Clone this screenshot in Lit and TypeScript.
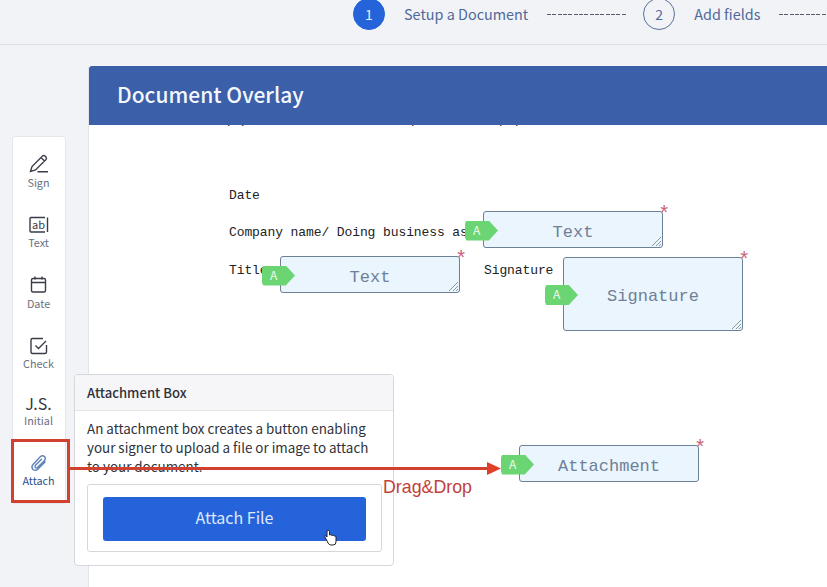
import { LitElement, html, css, svg } from "lit";
import { customElement } from "lit/decorators.js";

const ICONS: Record<string, any> = {
  sign: svg`<path d="M2.5 18.5 L4 13.5 L14.5 3 Q15.8 2 17 3 L18 4 Q19 5.2 18 6.5 L7.5 17 Z M13 4.5 L16.5 8 M9.5 18.8 H20" />`,
  date: svg`<rect x="3.500" y="4.500" width="14" height="13.500" rx="1.500"/><path d="M3.500 8.500 H17.500 M7 2.500 V5.500 M14 2.500 V5.500"/>`,
  check: svg`<path d="M18.500 10 V17 Q18.500 18.500 17 18.500 H4.500 Q3 18.500 3 17 V5 Q3 3.500 4.500 3.500 H15 M7.500 10.500 L10.500 13.500 L18 6"/>`,
  attach: svg`<path d="M17.500 9.500 L10 17 Q7.500 19.500 5 17.500 Q2.800 15 5 12.500 L12.500 4.500 Q14.500 2.800 16.500 4.500 Q18.200 6.500 16.500 8.500 L9.500 15.500 Q8.300 16.500 7.300 15.500 Q6.500 14.500 7.500 13.300 L14 6.800"/>`,
};

interface Tool { id: string; label: string; }
const TOOLS: Tool[] = [
  { id: "sign", label: "Sign" },
  { id: "text", label: "Text" },
  { id: "date", label: "Date" },
  { id: "check", label: "Check" },
  { id: "initial", label: "Initial" },
  { id: "attach", label: "Attach" },
];

interface Field { label: string; x: number; y: number; h: number; grip: boolean; }
const FIELDS: Field[] = [
  { label: "Text", x: 394, y: 86, h: 37, grip: true },
  { label: "Text", x: 191, y: 131, h: 37, grip: true },
  { label: "Signature", x: 474, y: 132, h: 74, grip: true },
  { label: "Attachment", x: 430, y: 320, h: 37, grip: false },
];

const DOC_TEXT = [
  { t: "Date", x: 140, y: 71 },
  { t: "Company name/ Doing business as", x: 140, y: 108 },
  { t: "Title", x: 140, y: 146 },
  { t: "Signature", x: 395, y: 146 },
];

@customElement("app-root")
export class AppRoot extends LitElement {
  static styles = css`
    :host {
      display: block;
      width: 827px;
      height: 587px;
      overflow: hidden;
      position: relative;
      background: #f2f3f7;
      font-family: "Noto Sans CJK SC", "Noto Sans", sans-serif;
    }
    .top {
      height: 44px;
      border-bottom: 1px solid #dcdde3;
      overflow: hidden;
      padding-left: 353px;
      display: flex;
      align-items: flex-start;
    }
    .steps {
      display: flex;
      align-items: center;
      height: 28px;
      white-space: nowrap;
      color: #4f6a9a;
      font-size: 14.400px;
    }
    .num {
      width: 32px;
      height: 32px;
      flex: none;
      box-sizing: border-box;
      border-radius: 50%;
      border: 1px solid #5b7199;
      display: flex;
      align-items: center;
      justify-content: center;
      font-size: 14px;
    }
    .num.on {
      background: #2563db;
      border-color: #2563db;
      color: #e6eefc;
    }
    .label { margin: 0 19px; padding-bottom: 2px; }
    .dash {
      width: 80px;
      height: 1px;
      flex: none;
      margin-right: 16px;
      background: repeating-linear-gradient(90deg, #555c6c 0 4px, transparent 4px 5.330px);
    }
    .main {
      display: flex;
      height: 542px;
    }
    .rail {
      width: 88px;
      flex: none;
      padding: 91px 0 0 12px;
      box-sizing: border-box;
    }
    .tools {
      width: 54px;
      height: 368px;
      box-sizing: border-box;
      background: #fff;
      border: 1px solid #e6e7ec;
      border-radius: 3px;
      display: flex;
      flex-direction: column;
      padding: 3px 1px 0 0;
    }
    .tool {
      height: 60.500px;
      flex: none;
      box-sizing: border-box;
      padding-top: 1px;
      display: flex;
      flex-direction: column;
      align-items: center;
      justify-content: center;
      color: #6b7080;
      font-size: 10.800px;
      line-height: 14px;
    }
    .tool.initial { height: 56.500px; }
    .tool svg {
      width: 22px;
      height: 22px;
      fill: none;
      stroke: #3a3d47;
      stroke-width: 1.400;
      margin-bottom: -0.500px;
    }
    .tool .glyph {
      fill: #3a3d47;
      stroke: none;
      font-size: 11px;
      font-family: "Noto Sans CJK SC", sans-serif;
    }
    .tool .js {
      color: #33363f;
      font-size: 16px;
      line-height: 18px;
      margin-bottom: 1px;
    }
    .tool.active { color: #2a5190; }
    .tool.active svg { stroke: #5f83b8; }
    .doc {
      flex: 1;
      margin-top: 21px;
      background: #fff;
      border-left: 1px solid #e4e5ea;
      display: flex;
      flex-direction: column;
      min-width: 0;
    }
    .doc-head {
      height: 59px;
      flex: none;
      box-sizing: border-box;
      padding: 0 0 4px 28px;
      background: #3b5fa8;
      border-radius: 3px 0 0 0;
      color: #f4f7fc;
      font-size: 21px;
      font-weight: 500;
      display: flex;
      align-items: center;
      position: relative;
      z-index: 1;
    }
    .page {
      flex: 1;
      position: relative;
      font-family: "Liberation Mono", monospace;
      font-size: 13px;
      color: #222;
    }
    .cut {
      position: absolute;
      top: -12px;
      line-height: 13px;
    }
    .line {
      position: absolute;
      line-height: 16px;
      letter-spacing: -0.100px;
      white-space: nowrap;
      transform: translateY(-8px);
    }
    .field {
      position: absolute;
      width: 180px;
      box-sizing: border-box;
      padding-top: 5px;
      background: #eaf5fd;
      border: 1px solid #6c8096;
      border-radius: 3px;
      display: flex;
      align-items: center;
      justify-content: center;
      color: #6f8097;
      font-size: 17px;
    }
    .badge {
      position: absolute;
      left: -19px;
      top: calc(50% - 9px);
      width: 33px;
      height: 20px;
      background: #6bd573;
      clip-path: polygon(0 15%, 4% 0, 72% 0, 100% 50%, 72% 100%, 4% 100%, 0 85%);
      color: #eefbee;
      font-family: "Noto Sans CJK SC", sans-serif;
      font-size: 12px;
      line-height: 17px;
      padding-left: 8px;
      box-sizing: border-box;
    }
    .star {
      position: absolute;
      right: -6px;
      top: -10px;
      color: #c9607c;
      font-family: "Liberation Sans", sans-serif;
      font-size: 20px;
      line-height: 20px;
    }
    .grip {
      position: absolute;
      right: 1px;
      bottom: 1px;
      width: 9px;
      height: 9px;
      stroke: #8b9a9a;
      stroke-width: 1;
      fill: none;
    }
    .pop {
      position: absolute;
      left: 74px;
      top: 374px;
      width: 320px;
      height: 192px;
      box-sizing: border-box;
      background: #fff;
      border: 1px solid #d6d7dc;
      border-radius: 4px;
      color: #2f323a;
      overflow: hidden;
      z-index: 2;
    }
    .pop-head {
      height: 36px;
      box-sizing: border-box;
      background: #f6f6f8;
      border-bottom: 1px solid #e4e5e9;
      padding-left: 12px;
      font-size: 13.100px;
      font-weight: 500;
      line-height: 36px;
    }
    .pop-body {
      padding: 8px 11px 12px 12px;
      font-size: 13.400px;
      line-height: 19px;
    }
    .pop-text { height: 57px; width: 290px; }
    .pop-box {
      margin-top: 8px;
      height: 68px;
      box-sizing: border-box;
      border: 1px solid #d6d7dc;
      border-radius: 3px;
      padding: 12px 15px;
    }
    .btn {
      height: 44px;
      box-sizing: border-box;
      padding-bottom: 3px;
      background: #2563db;
      border-radius: 3px;
      color: #dfe9fb;
      font-size: 16px;
      display: flex;
      align-items: center;
      justify-content: center;
    }
    .over {
      position: absolute;
      inset: 0;
      width: 827px;
      height: 587px;
      pointer-events: none;
      z-index: 3;
    }
    .drag {
      position: absolute;
      left: 383px;
      top: 477px;
      color: #c0413a;
      font-family: "Liberation Sans", sans-serif;
      font-size: 17.800px;
      line-height: 20px;
      z-index: 3;
    }
  `;

  render() {
    return html`
      <div class="top">
        <div class="steps">
          <div class="num on">1</div>
          <div class="label">Setup a Document</div>
          <div class="dash"></div>
          <div class="num">2</div>
          <div class="label">Add fields</div>
          <div class="dash"></div>
        </div>
      </div>
      <div class="main">
        <div class="rail">
          <div class="tools">
            ${TOOLS.map(
              (t) => html`
                <div class="tool ${t.id === "attach" ? "active" : ""} ${t.id === "initial" ? "initial" : ""}">
                  ${t.id === "initial"
                    ? html`<div class="js">J.S.</div>`
                    : t.id === "text"
                    ? html`<svg viewBox="0 0 22 22">
                        <path d="M17 3.500 H3 Q2 3.500 2 4.500 V17 Q2 18 3 18 H17" />
                        <path d="M19.500 3.500 V18" />
                        <text class="glyph" x="4" y="14.500">ab</text>
                      </svg>`
                    : html`<svg viewBox="0 0 22 22">${ICONS[t.id]}</svg>`}
                  <div>${t.label}</div>
                </div>
              `
            )}
          </div>
        </div>
        <div class="doc">
          <div class="doc-head">Document Overlay</div>
          <div class="page">
            <span class="cut" style="left:135px">(a)</span>
            <span class="cut" style="left:322px">p</span>
            <span class="cut" style="left:410px">p</span>
            <span class="cut" style="left:426px">p</span>
            ${DOC_TEXT.map(
              (d) => html`<div class="line" style="left:${d.x}px;top:${d.y}px">${d.t}</div>`
            )}
            ${FIELDS.map(
              (f) => html`
                <div class="field" style="left:${f.x}px;top:${f.y}px;height:${f.h}px">
                  <span class="badge">A</span>
                  ${f.label}
                  <span class="star">*</span>
                  ${f.grip
                    ? html`<svg class="grip" viewBox="0 0 9 9"><path d="M0 9 L9 0 M4 9 L9 4 M7 9 L9 7"/></svg>`
                    : ""}
                </div>
              `
            )}
          </div>
        </div>
      </div>
      <div class="pop">
        <div class="pop-head">Attachment Box</div>
        <div class="pop-body">
          <div class="pop-text">An attachment box creates a button enabling your signer to upload a file or image to attach to your document.</div>
          <div class="pop-box"><div class="btn">Attach File</div></div>
        </div>
      </div>
      <div class="drag">Drag&amp;Drop</div>
      <svg class="over" viewBox="0 0 827 587">
        <rect x="12.500" y="440.500" width="56" height="61" fill="none" stroke="#d2402f" stroke-width="3" />
        <path d="M69 468.500 H490" stroke="#d2402f" stroke-width="3" fill="none" />
        <path d="M487 462 L501 468.500 L487 475 Z" fill="#e0402a" />
        <path d="M327 531 V537 L325.500 535.500 Q324.500 535.500 325 537 L328 543 Q329 545 331 545 H333 Q336 545 336 542 V537 Q336 535.500 334.500 536 Q333 534.500 332 535.500 Q331 534 329.500 535 V531 Q328 529.500 327 531 Z" fill="#fff" stroke="#222" stroke-width="1" />
      </svg>
    `;
  }
}
